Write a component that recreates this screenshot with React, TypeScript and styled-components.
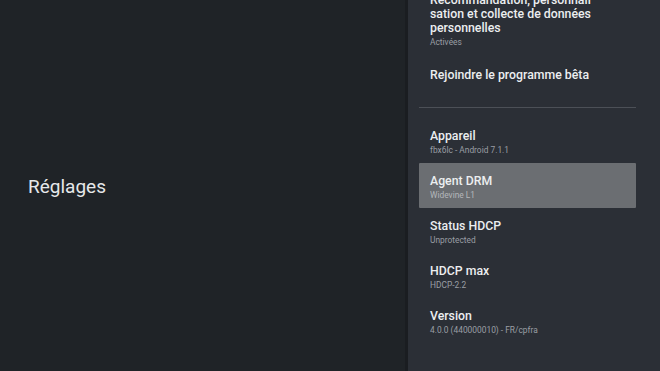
import React from "react";
import styled, { createGlobalStyle } from "styled-components";

const GlobalStyle = createGlobalStyle`
  html, body {
    margin: 0;
    padding: 0;
    background: #1f2327;
  }
  body {
    font-family: Roboto, "Noto Sans", sans-serif;
    -webkit-font-smoothing: antialiased;
  }
`;

const Screen = styled.div`
  display: flex;
  width: 660px;
  height: 371px;
  overflow: hidden;
  background: #1f2327;
`;

const Side = styled.div`
  flex: 1;
  display: flex;
  align-items: center;
  padding-left: 28px;
  padding-top: 2px;
`;

const Heading = styled.h1`
  margin: 0;
  font-size: 19px;
  font-weight: 400;
  color: #e6e8ea;
`;

const Panel = styled.div`
  width: 252px;
  border-left: 3px solid #1a1d21;
  background: #2b2f36;
  overflow: hidden;
`;

const List = styled.div`
  display: flex;
  flex-direction: column;
  margin-top: -18px;
  padding: 0 24px 0 11px;
`;

const Row = styled.div<{ $active?: boolean; $single?: boolean }>`
  display: flex;
  flex-direction: column;
  justify-content: ${(p) => (p.$single ? "center" : "flex-start")};
  min-height: ${(p) => (p.$single ? "40px" : "45px")};
  box-sizing: border-box;
  padding: ${(p) => (p.$single ? "0 11px" : "11px 11px 7px")};
  background: ${(p) => (p.$active ? "#6b6e72" : "transparent")};
  border-radius: 1px;
`;

const Title = styled.div`
  font-size: 12.3px;
  line-height: 14px;
  font-weight: 500;
  color: #eceef0;
`;

const Sub = styled.div<{ $active?: boolean }>`
  margin-top: 2px;
  font-size: 8.4px;
  line-height: 11px;
  color: ${(p) => (p.$active ? "#b4b7bb" : "#9a9ea4")};
`;

const Divider = styled.hr`
  margin: 12px 0 10px;
  border: 0;
  height: 1px;
  background: #4c5057;
`;

const info = [
  { title: "Appareil", sub: "fbx6lc - Android 7.1.1" },
  { title: "Agent DRM", sub: "Widevine L1", active: true },
  { title: "Status HDCP", sub: "Unprotected" },
  { title: "HDCP max", sub: "HDCP-2.2" },
  { title: "Version", sub: "4.0.0 (440000010) - FR/cpfra" },
];

export default function App() {
  return (
    <>
      <GlobalStyle />
      <Screen>
        <Side>
          <Heading>Réglages</Heading>
        </Side>
        <Panel>
          <List>
            <Row>
              <Title>
                Recommandation, personnali
                <br />
                sation et collecte de données
                <br />
                personnelles
              </Title>
              <Sub>Activées</Sub>
            </Row>
            <Row $single>
              <Title>Rejoindre le programme bêta</Title>
            </Row>
            <Divider />
            {info.map((item) => (
              <Row key={item.title} $active={item.active}>
                <Title>{item.title}</Title>
                <Sub $active={item.active}>{item.sub}</Sub>
              </Row>
            ))}
          </List>
        </Panel>
      </Screen>
    </>
  );
}
